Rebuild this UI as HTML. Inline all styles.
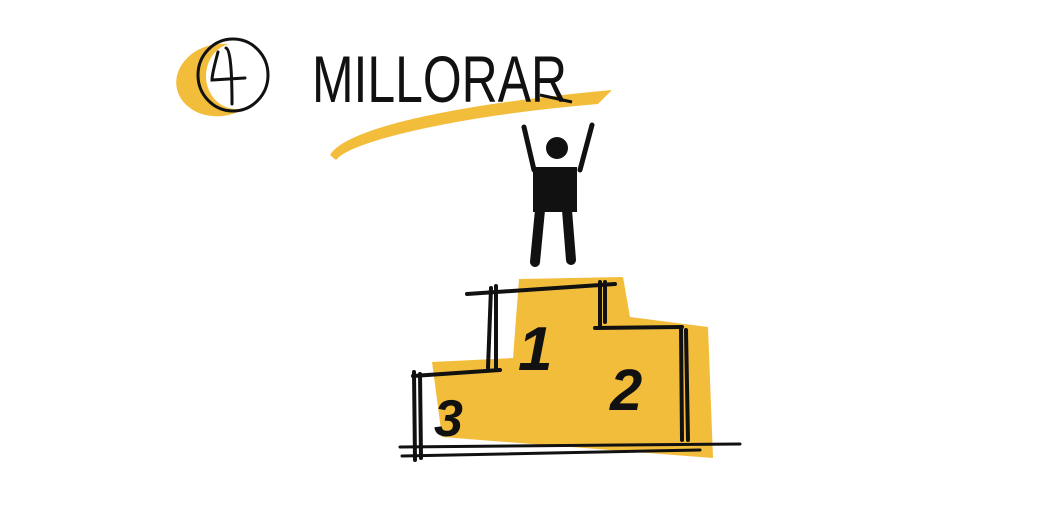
<!DOCTYPE html>
<html><head><meta charset="utf-8"><style>
html,body{margin:0;padding:0;background:#fff;width:1050px;height:525px;overflow:hidden}
svg{display:block}
</style></head><body>
<svg width="1050" height="525" viewBox="0 0 1050 525" xmlns="http://www.w3.org/2000/svg">
<!-- title -->
<ellipse cx="220" cy="80" rx="44" ry="36" fill="#f3bd3c" transform="rotate(-10 220 80)"/>
<ellipse cx="236" cy="76" rx="30" ry="33" fill="#fff"/>
<ellipse cx="233" cy="75" rx="35" ry="36" fill="none" stroke="#111" stroke-width="3"/>
<path d="M232 104 Q232 50 226 48 M218 52 Q212 74 212 80 L245 78" fill="none" stroke="#111" stroke-width="3" stroke-linecap="round"/>
<path d="M330 155 Q340 138 400 122 Q480 102 612 90 L598 104 Q480 114 400 134 Q345 148 336 160 Z" fill="#f3bd3c"/>
<text x="312" y="102" font-family="Liberation Sans Narrow, Liberation Sans, sans-serif" font-size="66" fill="#111" textLength="255" lengthAdjust="spacingAndGlyphs">MILLORAR</text>
<path d="M540 95 L572 102" stroke="#111" stroke-width="3"/>
<!-- yellow podium -->
<path d="M519 279 L623 277 L630 317 L708 327 L713 458 L442 437 L432 362 L513 358 Z" fill="#f3bd3c"/>
<!-- figure -->
<circle cx="557" cy="148" r="11" fill="#111"/>
<path d="M524 127 L534 170 M592 125 L580 170" stroke="#111" stroke-width="5" stroke-linecap="round"/>
<rect x="533" y="167" width="44" height="45" fill="#111"/>
<path d="M540 210 L535 262 M567 210 L571 260" stroke="#111" stroke-width="10" stroke-linecap="round"/>
<!-- podium lines -->
<g stroke="#111" stroke-width="4" fill="none" stroke-linecap="round">
<path d="M467 294 L615 284"/>
<path d="M496 286 L496 370 M491 288 L488 368"/>
<path d="M600 282 L600 325 M605 282 L605 322"/>
<path d="M595 328 L682 327"/>
<path d="M681 327 L682 440 M686 330 L688 440"/>
<path d="M413 376 L500 370"/>
<path d="M414 372 L415 460 M420 374 L421 458"/>
<path d="M400 447 L740 444 M402 456 L700 450" stroke-width="3"/>
</g>
<g fill="#111" font-family="Liberation Sans, sans-serif" font-weight="bold" font-style="italic">
<text x="518" y="370" font-size="62" transform="translate(0 0)">1</text>
<text x="610" y="410" font-size="58">2</text>
<text x="434" y="436" font-size="52">3</text>
</g>
</svg>
</body></html>
